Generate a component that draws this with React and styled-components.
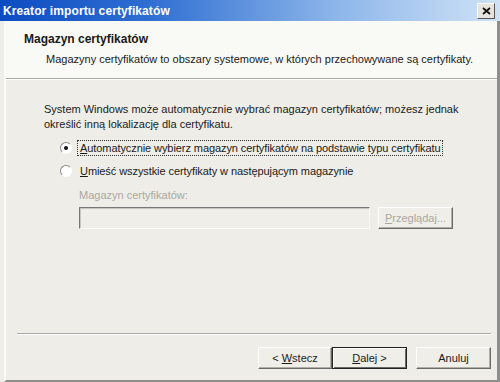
import React from 'react'
import styled, { createGlobalStyle } from 'styled-components'

const GlobalStyle = createGlobalStyle`
    html, body {
        margin: 0;
        padding: 0;
        background: #eeede7;
    }
    body {
        font-family: Tahoma, "Liberation Sans", Arial, sans-serif;
        font-size: 11px;
        color: #1a1a1a;
    }
`

const App = () =>
    <>
        <GlobalStyle />
        <StyledWindow>
            <StyledTitleBar>
                <StyledTitle>Kreator importu certyfikatów</StyledTitle>
                <StyledClose aria-label='Zamknij'>
                    <svg width='9' height='8' viewBox='0 0 9 8'>
                        <path d='M1 1 L8 7 M8 1 L1 7' stroke='#111' strokeWidth='1.8' />
                    </svg>
                </StyledClose>
            </StyledTitleBar>
            <StyledFrame>
                <StyledHeader>
                    <StyledHeading>Magazyn certyfikatów</StyledHeading>
                    <StyledSubtitle>Magazyny certyfikatów to obszary systemowe, w których przechowywane są certyfikaty.</StyledSubtitle>
                </StyledHeader>
                <StyledContent>
                    <StyledIntro>
                        System Windows może automatycznie wybrać magazyn certyfikatów; możesz jednak<br />
                        określić inną lokalizację dla certyfikatu.
                    </StyledIntro>
                    <StyledOptions>
                        <StyledOption>
                            <StyledRadio checked />
                            <StyledLabel focused><u>A</u>utomatycznie wybierz magazyn certyfikatów na podstawie typu certyfikatu</StyledLabel>
                        </StyledOption>
                        <StyledOption>
                            <StyledRadio />
                            <StyledLabel><u>U</u>mieść wszystkie certyfikaty w następującym magazynie</StyledLabel>
                        </StyledOption>
                    </StyledOptions>
                    <StyledStore>
                        <StyledStoreLabel>Magazyn certyfikatów:</StyledStoreLabel>
                        <StyledStoreRow>
                            <StyledInput />
                            <StyledButton disabled width='75px'><u>P</u>rzeglądaj...</StyledButton>
                        </StyledStoreRow>
                    </StyledStore>
                </StyledContent>
                <StyledFooter>
                    <StyledButton width='74px'>&lt;&nbsp;<u>W</u>stecz</StyledButton>
                    <StyledButton width='75px' primary><u>D</u>alej &gt;</StyledButton>
                    <StyledCancel width='75px'>Anuluj</StyledCancel>
                </StyledFooter>
            </StyledFrame>
        </StyledWindow>
    </>

export default App

const StyledWindow = styled.div`
    width: 500px;
    height: 382px;
    display: flex;
    flex-direction: column;
    box-sizing: border-box;
    overflow: hidden;
    background: #eeede7;
`

const StyledTitleBar = styled.div`
    height: 21px;
    flex: none;
    display: flex;
    align-items: center;
    justify-content: space-between;
    padding: 0 5px 0 3px;
    background: linear-gradient(to right, #0c4cc2 0%, #2f6fd2 30%, #8fb7ea 68%, #cfe2f6 100%);
`

const StyledTitle = styled.span`
    color: #fff;
    font-weight: bold;
    font-size: 12px;
    letter-spacing: 0.1px;
`

const StyledClose = styled.div`
    width: 16px;
    height: 14px;
    display: flex;
    align-items: center;
    justify-content: center;
    background: #e6e4dc;
    border: 1px solid;
    border-color: #fff #555 #555 #fff;
`

const StyledFrame = styled.div`
    flex: 1;
    display: flex;
    flex-direction: column;
    border-left: 2px solid #fbfbf8;
    border-right: 3px solid #8e8e8c;
    border-bottom: 2px solid #8e8e8c;
    margin-left: 4px;
`

const StyledHeader = styled.div`
    height: 58px;
    flex: none;
    box-sizing: border-box;
    padding: 11px 0 0 18px;
    background: #f9f9f5;
    border-bottom: 1px solid #a8a7a2;
    box-shadow: 0 1px 0 #fff;
`

const StyledHeading = styled.div`
    font-weight: bold;
    font-size: 12px;
    margin-bottom: 7px;
`

const StyledSubtitle = styled.div`
    padding-left: 22px;
`

const StyledContent = styled.div`
    flex: 1;
    padding: 23px 0 0 38px;
`

const StyledIntro = styled.p`
    margin: 0 0 8px;
    line-height: 15px;
`

const StyledOptions = styled.div`
    display: flex;
    flex-direction: column;
    gap: 7px;
    padding-left: 16px;
`

const StyledOption = styled.div`
    display: flex;
    align-items: center;
    gap: 5px;
`

const StyledRadio = styled.span`
    width: 10px;
    height: 10px;
    flex: none;
    border-radius: 50%;
    border: 1px solid;
    border-color: #8a8a86 #fff #fff #8a8a86;
    background: #fff;
    position: relative;

    &::after {
        content: '';
        display: ${p => p.checked ? 'block' : 'none'};
        position: absolute;
        left: 3px;
        top: 3px;
        width: 4px;
        height: 4px;
        border-radius: 50%;
        background: #111;
    }
`

const StyledLabel = styled.span`
    padding: 1px 2px;
    letter-spacing: -0.08px;
    border: 1px dotted ${p => p.focused ? '#333' : 'transparent'};
`

const StyledStore = styled.div`
    padding: 10px 0 0 35px;
`

const StyledStoreLabel = styled.div`
    color: #a9a8a2;
    margin-bottom: 6px;
`

const StyledStoreRow = styled.div`
    display: flex;
    align-items: center;
    gap: 8px;
`

const StyledInput = styled.div`
    width: 291px;
    height: 22px;
    box-sizing: border-box;
    border: 1px solid;
    border-color: #777 #f8f8f4 #f8f8f4 #777;
    box-shadow: inset 1px 1px 0 #c8c7c0;
    background: #efeee8;
`

const StyledButton = styled.div`
    width: ${p => p.width};
    height: 22px;
    box-sizing: border-box;
    display: flex;
    align-items: center;
    justify-content: center;
    color: ${p => p.disabled ? '#a9a8a2' : '#1a1a1a'};
    background: #efeee8;
    border: 1px solid;
    border-color: ${p => p.primary ? '#222' : '#fff #6a6a68 #6a6a68 #fff'};
    box-shadow: ${p => p.primary
        ? 'inset 1px 1px 0 #fff, inset -1px -1px 0 #6a6a68'
        : 'inset -1px -1px 0 #b0afa8'};
`

const StyledCancel = styled(StyledButton)`
    margin-left: 9px;
`

const StyledFooter = styled.div`
    flex: none;
    display: flex;
    justify-content: flex-end;
    align-items: center;
    margin: 0 6px 0 11px;
    padding: 13px 0 11px;
    border-top: 1px solid #a8a7a2;
    box-shadow: inset 0 1px 0 #fff;
`
